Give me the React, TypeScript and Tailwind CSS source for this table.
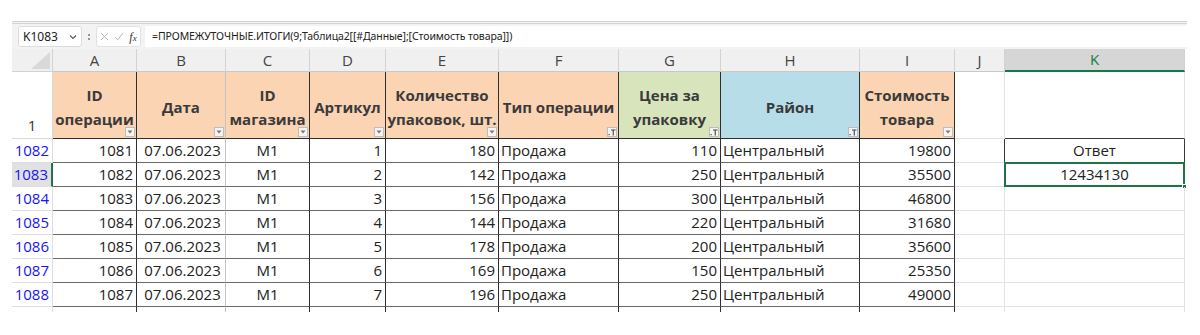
import React from "react";

const ORANGE = "bg-[#fbd4b4]";
const GREEN = "bg-[#d8e4bc]";
const BLUE = "bg-[#b7dee8]";

type Hdr = { lines: string[]; bg: string; filter: "down" | "funnel" };

const headers: Hdr[] = [
  { lines: ["ID", "операции"], bg: ORANGE, filter: "down" },
  { lines: ["Дата"], bg: ORANGE, filter: "down" },
  { lines: ["ID", "магазина"], bg: ORANGE, filter: "down" },
  { lines: ["Артикул"], bg: ORANGE, filter: "down" },
  { lines: ["Количество", "упаковок, шт."], bg: ORANGE, filter: "down" },
  { lines: ["Тип операции"], bg: ORANGE, filter: "funnel" },
  { lines: ["Цена за", "упаковку"], bg: GREEN, filter: "funnel" },
  { lines: ["Район"], bg: BLUE, filter: "funnel" },
  { lines: ["Стоимость", "товара"], bg: ORANGE, filter: "down" },
];

const rows = [
  ["1082", "1081", "1", "180", "110", "19800"],
  ["1083", "1082", "2", "142", "250", "35500"],
  ["1084", "1083", "3", "156", "300", "46800"],
  ["1085", "1084", "4", "144", "220", "31680"],
  ["1086", "1085", "5", "178", "200", "35600"],
  ["1087", "1086", "6", "169", "150", "25350"],
  ["1088", "1087", "7", "196", "250", "49000"],
];

const letters = ["A", "B", "C", "D", "E", "F", "G", "H", "I", "J", "K"];

const vRight = [
  "border-r-[#2f2f2f]",
  "border-r-[#c4c4c4]",
  "border-r-[#2f2f2f]",
  "border-r-[#2f2f2f]",
  "border-r-[#2f2f2f]",
  "border-r-[#2f2f2f]",
  "border-r-[#2f2f2f]",
  "border-r-[#2f2f2f]",
  "border-r-[#2f2f2f]",
];

function FilterBtn({ kind }: { kind: "down" | "funnel" }) {
  return (
    <div className="absolute right-[1px] bottom-[1px] w-[10px] h-[10px] bg-[#f4f4f4] border border-[#bdbdbd] flex items-center justify-center">
      {kind === "down" ? (
        <svg width="6" height="4" viewBox="0 0 6 4">
          <path d="M0.5 0.5 L5.5 0.5 L3 3.5 Z" fill="#777" />
        </svg>
      ) : (
        <svg width="8" height="7" viewBox="0 0 8 7">
          <rect x="0.5" y="5" width="1.2" height="1.2" fill="#444" />
          <path d="M3 1 L7.5 1 M5.25 1 L5.25 6.5" stroke="#444" strokeWidth="1.1" fill="none" />
        </svg>
      )}
    </div>
  );
}

function FormulaBar() {
  return (
    <div className="h-[28px] bg-[#f3f3f3] border-t-[3px] border-double border-[#d4d4d4] flex items-center">
      <div className="ml-[6px] w-[64px] h-[21px] bg-white border border-[#dcdcdc] rounded-[3px] flex items-center justify-between pl-[4px] pr-[4px] text-[12px] text-[#222] font-['Noto_Sans',sans-serif]">
        <span>K1083</span>
        <svg width="8" height="6" viewBox="0 0 8 6">
          <path d="M1 1.5 L4 4.5 L7 1.5" stroke="#555" strokeWidth="1.1" fill="none" />
        </svg>
      </div>
      <div className="w-[14px] flex flex-col items-center justify-center gap-[2px]">
        <div className="w-[2px] h-[2px] bg-[#777] rounded-full" />
        <div className="w-[2px] h-[2px] bg-[#777] rounded-full" />
      </div>
      <div className="w-[45px] h-[21px] bg-white border border-[#e2e2e2] rounded-[3px] flex items-center justify-center gap-[5px]">
        <svg width="9" height="9" viewBox="0 0 9 9">
          <path d="M1 1 L8 8 M8 1 L1 8" stroke="#b4b4b4" strokeWidth="1" />
        </svg>
        <svg width="10" height="9" viewBox="0 0 10 9">
          <path d="M1 5 L3.7 7.8 L9 1" stroke="#b4b4b4" strokeWidth="1" fill="none" />
        </svg>
        <span className="font-['Liberation_Serif',serif] italic text-[12px] text-[#333] leading-none">
          f<span className="text-[9px]">x</span>
        </span>
      </div>
      <div className="ml-[4px] flex-1 h-[21px] bg-white flex items-center pl-[7px] text-[10.5px] text-[#222] font-['Noto_Sans',sans-serif] tracking-[-0.1px]">
        =ПРОМЕЖУТОЧНЫЕ.ИТОГИ(9;Таблица2[[#Данные];[Стоимость товара]])
      </div>
    </div>
  );
}

function Sheet() {
  return (
    <div className="grid grid-cols-[41px_84px_89px_84px_76px_113px_120px_102px_139px_95px_50px_180px] text-[#222]">
      <div className="h-[23px] bg-[#f0f0f0] border-r border-b border-[#d2d2d2] relative overflow-hidden">
        <svg className="absolute right-[2px] bottom-[2px]" width="19" height="17" viewBox="0 0 19 17">
          <path d="M19 0 L19 17 L0 17 Z" fill="#d9d9d9" />
        </svg>
      </div>
      {letters.map((l) => (
        <div
          key={l}
          className={
            "h-[23px] flex items-center justify-center text-[15px] border-r border-[#d2d2d2] " +
            (l === "K"
              ? "bg-[#d6d6d6] text-[#107c41] border-b-2 border-b-[#107c41]"
              : "bg-[#f0f0f0] text-[#444] border-b border-b-[#c8c8c8]")
          }
        >
          {l}
        </div>
      ))}

      <div className="h-[67px] bg-white border-r border-b border-[#d8d8d8] flex items-end justify-center pb-[2px] text-[15px] text-[#333]">
        1
      </div>
      {headers.map((h, i) => (
        <div
          key={i}
          className={
            "h-[67px] relative flex flex-col items-center justify-center pt-[3px] font-bold text-[15px] text-[#3a3a3a] leading-[24px] border-r border-b border-b-[#2f2f2f] " +
            h.bg +
            " " +
            vRight[i]
          }
        >
          {h.lines.map((t) => (
            <span key={t} className="whitespace-nowrap">
              {t}
            </span>
          ))}
          <FilterBtn kind={h.filter} />
        </div>
      ))}
      <div className="h-[67px] bg-white border-r border-b border-[#e3e3e3]" />
      <div className="h-[67px] bg-white border-r border-[#e3e3e3] border-b border-b-[#3a3a3a]" />

      {rows.map((r, ri) => {
        const sel = ri === 1;
        const cell = "h-[24px] flex items-center text-[15px] whitespace-nowrap border-r border-b border-b-[#6a6a6a] ";
        return (
          <React.Fragment key={r[0]}>
            <div
              className={
                "h-[24px] flex items-center justify-end pr-[3px] text-[15px] text-[#1515ff] border-b border-[#dedede] " +
                (sel ? "bg-[#e1e1e1] border-r-2 border-r-[#217346]" : "bg-white border-r")
              }
            >
              {r[0]}
            </div>
            <div className={cell + vRight[0] + " justify-end pr-[3px]"}>{r[1]}</div>
            <div className={cell + vRight[1] + " justify-center pl-[3px]"}>07.06.2023</div>
            <div className={cell + vRight[2] + " justify-center"}>М1</div>
            <div className={cell + vRight[3] + " justify-end pr-[3px]"}>{r[2]}</div>
            <div className={cell + vRight[4] + " justify-end pr-[3px]"}>{r[3]}</div>
            <div className={cell + vRight[5] + " justify-start pl-[2px]"}>Продажа</div>
            <div className={cell + vRight[6] + " justify-end pr-[3px]"}>{r[4]}</div>
            <div className={cell + vRight[7] + " justify-start pl-[2px]"}>Центральный</div>
            <div className={cell + vRight[8] + " justify-end pr-[3px]"}>{r[5]}</div>
            <div
              className={
                "h-[24px] border-b border-[#e3e3e3] border-r " +
                (ri === 0 ? "border-r-[#3a3a3a]" : "")
              }
            />
            <div
              className={
                "h-[24px] relative flex items-center justify-center text-[15px] border-r border-b " +
                (ri === 0 ? "border-[#3a3a3a]" : "border-[#e3e3e3]")
              }
            >
              {ri === 0 && "Ответ"}
              {ri === 1 && (
                <>
                  12434130
                  <div className="absolute -left-[1px] -top-[1px] -right-[1px] -bottom-[1px] border-2 border-[#217346]" />
                  <div className="absolute -right-[3px] -bottom-[3px] w-[5px] h-[5px] bg-[#217346] border border-white" />
                </>
              )}
            </div>
          </React.Fragment>
        );
      })}

      <div className="h-[5px] bg-white border-r border-[#dedede]" />
      {vRight.map((v, i) => (
        <div key={i} className={"h-[5px] border-r " + v} />
      ))}
      <div className="h-[5px] border-r border-[#e3e3e3]" />
      <div className="h-[5px] border-r border-[#e3e3e3]" />
    </div>
  );
}

export default function App() {
  return (
    <div className="w-[1200px] h-[335px] bg-white overflow-hidden font-['Open_Sans','Noto_Sans',sans-serif]">
      <div className="h-[21px]" />
      <div className="ml-[12px] w-[1175px]">
        <FormulaBar />
        <Sheet />
      </div>
    </div>
  );
}
